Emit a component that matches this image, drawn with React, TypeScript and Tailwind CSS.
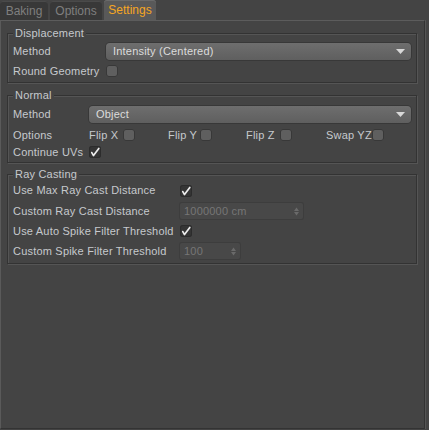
import React from "react";

const font = { fontFamily: '"Liberation Sans", Arial, sans-serif' };

function Check({ checked = false }: { checked?: boolean }) {
  return (
    <span
      className={
        "inline-flex h-[12px] w-[12px] shrink-0 items-center justify-center rounded-[3px] " +
        (checked
          ? "bg-[#353535] shadow-[inset_0_0_0_1px_#2c2c2c]"
          : "bg-[#5f5f5f] shadow-[inset_0_0_0_1px_#383838]")
      }
    >
      {checked && (
        <svg width="10" height="10" viewBox="0 0 10 10">
          <path d="M1.8 5.6 L3.5 8.6 L8.8 1.4" fill="none" stroke="#ececec" strokeWidth="1.7" strokeLinecap="round" strokeLinejoin="round" />
        </svg>
      )}
    </span>
  );
}

function Dropdown({ text, className }: { text: string; className: string }) {
  return (
    <div
      className={
        "flex h-[17px] items-center justify-between rounded-[4px] bg-gradient-to-b from-[#6e6e6e] to-[#5f5f5f] pl-[7px] pr-[6px] text-[#dcdcdc] shadow-[0_0_0_1px_#383838] " +
        className
      }
    >
      <span>{text}</span>
      <svg width="9" height="5" viewBox="0 0 9 5">
        <path d="M0 0 H9 L4.5 5 Z" fill="#d8d8d8" />
      </svg>
    </div>
  );
}

function Spin({ text, className }: { text: string; className: string }) {
  return (
    <div
      className={
        "flex h-[16px] items-center justify-between rounded-[2px] bg-[#484848] pl-[4px] pr-[4px] text-[#767676] shadow-[0_0_0_1px_#3d3d3d] " +
        className
      }
    >
      <span>{text}</span>
      <svg width="5" height="9" viewBox="0 0 5 9">
        <path d="M0 4 L2.5 0.5 L5 4 Z M0 5 L2.5 8.5 L5 5 Z" fill="#6a6a6a" />
      </svg>
    </div>
  );
}

function Group({ title, children, className = "" }: { title: string; children: React.ReactNode; className?: string }) {
  return (
    <div
      className={
        "relative ml-[6px] mr-[7px] border border-[#333333] pl-[5px] pr-[5px] shadow-[inset_1px_1px_0_#555555,1px_1px_0_#555555] " +
        className
      }
    >
      <span className="absolute left-[5px] top-[-7px] bg-[#444444] px-[2px] leading-[12px] text-[#c6c9cd]">{title}</span>
      {children}
    </div>
  );
}

export default function App() {
  const lbl = "text-[#c6c9cd] whitespace-nowrap";
  return (
    <div className="relative h-[430px] w-[429px] bg-[#444444] text-[11px] tracking-[0.2px]" style={font}>
      <div className="flex h-[20px] items-end gap-[2px] tracking-normal">
        <div className="flex h-[19px] w-[48px] items-center justify-center rounded-t-[3px] bg-[#383838] text-[12px] text-[#7f7f7f] shadow-[inset_0_1px_0_#4a4a4a]">
          Baking
        </div>
        <div className="flex h-[19px] w-[52px] items-center justify-center rounded-t-[3px] bg-[#383838] text-[12px] text-[#7f7f7f] shadow-[inset_0_1px_0_#4a4a4a]">
          Options
        </div>
        <div className="flex h-[20px] w-[52px] items-center justify-center rounded-t-[3px] bg-[#595959] text-[12px] text-[#f5a623] shadow-[inset_0_1px_0_#6a6a6a]">
          Settings
        </div>
      </div>
      <div className="flex h-[409px] w-[425px] flex-col border border-t-[#5c5c5c] border-r-[#333333] border-b-[#333333] border-l-[#5a5a5a] pt-[12px] shadow-[1px_0_0_#555555]">
        <Group title="Displacement" className="pt-[7px] pb-[1px]">
          <div className="flex h-[20px] items-center">
            <span className={"w-[93px] " + lbl}>Method</span>
            <Dropdown text="Intensity (Centered)" className="flex-1" />
          </div>
          <div className="flex h-[20px] items-center">
            <span className={"w-[93px] " + lbl}>Round Geometry</span>
            <Check />
          </div>
        </Group>
        <Group title="Normal" className="mt-[12px] pt-[8px] pb-[3px]">
          <div className="flex h-[21px] items-center">
            <span className={"w-[76px] " + lbl}>Method</span>
            <Dropdown text="Object" className="flex-1" />
          </div>
          <div className="flex h-[20px] items-center">
            <span className={"w-[76px] " + lbl}>Options</span>
            <div className="flex w-[79px] items-center">
              <span className={"w-[34px] " + lbl}>Flip X</span>
              <Check />
            </div>
            <div className="flex w-[78px] items-center">
              <span className={"w-[32px] " + lbl}>Flip Y</span>
              <Check />
            </div>
            <div className="flex w-[80px] items-center">
              <span className={"w-[34px] " + lbl}>Flip Z</span>
              <Check />
            </div>
            <div className="flex items-center">
              <span className={"w-[46px] " + lbl}>Swap YZ</span>
              <Check />
            </div>
          </div>
          <div className="flex h-[14px] items-center">
            <span className={"w-[76px] " + lbl}>Continue UVs</span>
            <Check checked />
          </div>
        </Group>
        <Group title="Ray Casting" className="mt-[11px] pt-[5px] pb-[2px]">
          <div className="flex h-[21px] items-center">
            <span className={"w-[167px] " + lbl}>Use Max Ray Cast Distance</span>
            <Check checked />
          </div>
          <div className="flex h-[20px] items-center">
            <span className={"w-[167px] " + lbl}>Custom Ray Cast Distance</span>
            <Spin text="1000000 cm" className="w-[123px]" />
          </div>
          <div className="flex h-[20px] items-center">
            <span className={"w-[167px] " + lbl}>Use Auto Spike Filter Threshold</span>
            <Check checked />
          </div>
          <div className="flex h-[20px] items-center">
            <span className={"w-[167px] " + lbl}>Custom Spike Filter Threshold</span>
            <Spin text="100" className="w-[60px]" />
          </div>
        </Group>
      </div>
    </div>
  );
}
